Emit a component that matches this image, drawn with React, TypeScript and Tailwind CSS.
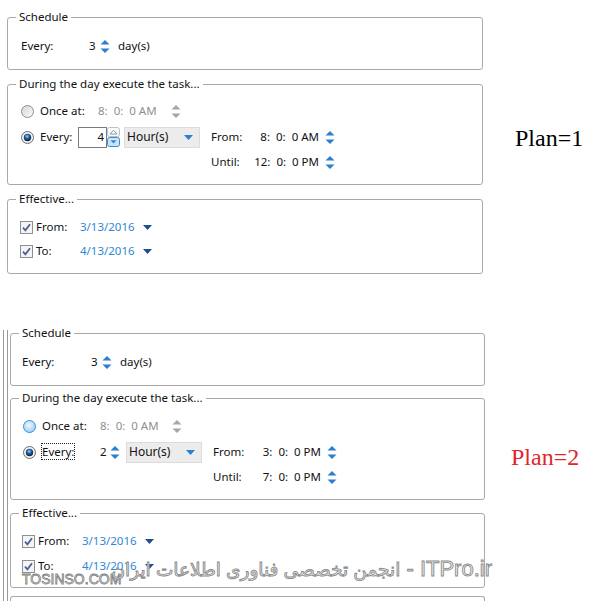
import React from 'react'

// small drawings for the WinForms-like controls
function Spin({ off = false }: { off?: boolean }) {
  const c = off ? '#a6a6a6' : '#2a7fcf'
  return (
    <svg width="10" height="15" viewBox="0 0 10 15" className="shrink-0">
      <path d="M0.5 5.5L5 1L9.5 5.5Z" fill={c} />
      <path d="M0.5 9.5L5 14L9.5 9.5Z" fill={c} />
    </svg>
  )
}

function SpinBox() {
  return (
    <svg width="13" height="20" viewBox="0 0 13 20" className="shrink-0">
      <rect x="0.5" y="0.5" width="12" height="9" rx="2" fill="#fafafa" stroke="#b9c2cc" />
      <path d="M3 7L6.5 3.3L10 7Z" fill="#fff" stroke="#8a8a8a" strokeWidth="0.9" strokeLinejoin="round" />
      <rect x="0.5" y="10.5" width="12" height="9" rx="2" fill="#c4e3f8" stroke="#3c8ccd" />
      <path d="M2.8 13L6.5 16.8L10.2 13Z" fill="#2a7fcf" stroke="#e8f4fd" strokeWidth="0.6" />
    </svg>
  )
}

function Radio({ kind }: { kind: 'off' | 'hover' | 'on' }) {
  return (
    <svg width="13" height="13" viewBox="0 0 13 13" className="shrink-0">
      <defs>
        <linearGradient id="r-off" x1="0" y1="0" x2="1" y2="1">
          <stop offset="0" stopColor="#d4d4d4" />
          <stop offset="1" stopColor="#fbfbfb" />
        </linearGradient>
        <radialGradient id="r-hover" cx="0.45" cy="0.4" r="0.6">
          <stop offset="0" stopColor="#eef8ff" />
          <stop offset="1" stopColor="#9dd0f4" />
        </radialGradient>
        <radialGradient id="r-dot" cx="0.45" cy="0.35" r="0.6">
          <stop offset="0" stopColor="#9ad2fa" />
          <stop offset="0.5" stopColor="#235f9e" />
          <stop offset="1" stopColor="#0a2544" />
        </radialGradient>
      </defs>
      {kind === 'off' && <circle cx="6.5" cy="6.5" r="6" fill="url(#r-off)" stroke="#8d8d8d" />}
      {kind === 'hover' && <circle cx="6.5" cy="6.5" r="6" fill="url(#r-hover)" stroke="#3c8fd2" />}
      {kind === 'on' && (
        <>
          <circle cx="6.5" cy="6.5" r="6" fill="#f2f2f2" stroke="#6d6d6d" />
          <circle cx="6.5" cy="6.5" r="3.7" fill="url(#r-dot)" />
        </>
      )}
    </svg>
  )
}

function Check() {
  return (
    <svg width="13" height="13" viewBox="0 0 13 13" className="shrink-0">
      <rect x="0.5" y="0.5" width="12" height="12" fill="#f4f4f4" stroke="#8e8f8f" />
      <path d="M3 6.6L5.4 9.3L10 3.2" fill="none" stroke="#4a5b9c" strokeWidth="1.7" />
    </svg>
  )
}

function Caret({ dark = false }: { dark?: boolean }) {
  return (
    <svg width="9" height="5" viewBox="0 0 9 5" className="shrink-0">
      <path d="M0 0H9L4.5 5Z" fill={dark ? '#1b4f8e' : '#2a7fcf'} />
    </svg>
  )
}

function Group({ title, className, children }: { title: string; className: string; children: React.ReactNode }) {
  return (
    <div className={`relative border border-[#a9a9a9] rounded-[3px] ${className}`}>
      <span className="absolute left-[8px] -top-[9px] px-[3px] bg-white leading-[16px]">{title}</span>
      {children}
    </div>
  )
}

function Row({ className = '', children }: { className?: string; children: React.ReactNode }) {
  return <div className={`flex items-center h-[20px] ${className}`}>{children}</div>
}

function Combo() {
  return (
    <div className="w-[76px] h-[21px] shrink-0 bg-[#ececec] border border-[#dcdcdc] flex items-center justify-between pl-[2px] pr-[6px]">
      <span className="text-[12px]">Hour(s)</span>
      <Caret />
    </div>
  )
}

function DateRow({ label, value, className = '' }: { label: string; value: string; className?: string }) {
  return (
    <Row className={className}>
      <Check />
      <span className="ml-[3px] w-[44px]">{label}</span>
      <span className="w-[63px] text-[#2f88d4]">{value}</span>
      <Caret dark />
    </Row>
  )
}

function Until({ value }: { value: string }) {
  return (
    <Row className="mt-[5px]">
      <span className="ml-[190px] w-[39px]">Until:</span>
      <span className="w-[69px] text-right whitespace-pre">{value}</span>
      <span className="ml-[6px]"><Spin /></span>
    </Row>
  )
}

export default function App() {
  return (
    <div className="relative w-[609px] h-[601px] overflow-hidden bg-white font-['Segoe_UI','Noto_Sans',sans-serif] text-[11.5px] leading-[16px] text-[#111]">
      {/* Plan 1 */}
      <section className="flex pt-[17px]">
        <div className="ml-[7px] w-[476px] flex flex-col">
          <Group title="Schedule" className="h-[53px] pt-[18px] pl-[13px]">
            <Row>
              <span className="w-[68px]">Every:</span>
              <span className="w-[7px]">3</span>
              <span className="ml-[4px]"><Spin /></span>
              <span className="ml-[8px]">day(s)</span>
            </Row>
          </Group>

          <Group title="During the day execute the task..." className="mt-[14px] h-[101px] pt-[16px] pl-[13px]">
            <Row>
              <Radio kind="off" />
              <span className="ml-[6px] w-[58px]">Once at:</span>
              <span className="w-[73px] whitespace-pre text-[#8f8f8f]">8:  0:  0 AM</span>
              <Spin off />
            </Row>
            <Row className="mt-[6px]">
              <Radio kind="on" />
              <span className="ml-[6px] w-[38px]">Every:</span>
              <div className="w-[29px] h-[21px] shrink-0 border border-[#7a7a7a] flex items-center justify-end pr-[2px]">4</div>
              <SpinBox />
              <span className="ml-[4px]"><Combo /></span>
              <span className="ml-[11px] w-[39px]">From:</span>
              <span className="w-[69px] text-right whitespace-pre">8:  0:  0 AM</span>
              <span className="ml-[6px]"><Spin /></span>
            </Row>
            <Until value="12:  0:  0 PM" />
          </Group>

          <Group title="Effective..." className="mt-[14px] h-[75px] pt-[17px] pl-[12px]">
            <DateRow label="From:" value="3/13/2016" />
            <DateRow label="To:" value="4/13/2016" className="mt-[4px]" />
          </Group>
        </div>
        <div className="ml-[32px] pt-[107px] font-['Liberation_Serif',serif] text-[24px] leading-[28px] text-black">Plan=1</div>
      </section>

      {/* Plan 2 */}
      <section className="mt-[56px] flex">
        <div className="ml-[3px] border-l border-[#9a9a9a] pl-[3px]">
          <div className="border-l border-[#9a9a9a] pl-[2px] pt-[3px]">
            <div className="w-[475px] flex flex-col">
              <Group title="Schedule" className="h-[53px] pt-[18px] pl-[11px]">
                <Row>
                  <span className="w-[69px]">Every:</span>
                  <span className="w-[7px]">3</span>
                  <span className="ml-[4px]"><Spin /></span>
                  <span className="ml-[8px]">day(s)</span>
                </Row>
              </Group>

              <Group title="During the day execute the task..." className="mt-[12px] h-[102px] pt-[17px] pl-[12px]">
                <Row>
                  <Radio kind="hover" />
                  <span className="ml-[6px] w-[58px]">Once at:</span>
                  <span className="w-[72px] whitespace-pre text-[#8f8f8f]">8:  0:  0 AM</span>
                  <Spin off />
                </Row>
                <Row className="mt-[6px]">
                  <Radio kind="on" />
                  <span className="ml-[6px] w-[58px]">
                    <span className="outline-1 outline-dotted outline-[#222]">Every:</span>
                  </span>
                  <span className="w-[7px]">2</span>
                  <span className="ml-[3px]"><Spin /></span>
                  <span className="ml-[6px]"><Combo /></span>
                  <span className="ml-[11px] w-[39px]">From:</span>
                  <span className="w-[69px] text-right whitespace-pre">3:  0:  0 PM</span>
                  <span className="ml-[6px]"><Spin /></span>
                </Row>
                <Until value="7:  0:  0 PM" />
              </Group>

              <Group title="Effective..." className="mt-[13px] h-[75px] pt-[17px] pl-[11px]">
                <DateRow label="From:" value="3/13/2016" />
                <DateRow label="To:" value="4/13/2016" className="mt-[5px]" />
              </Group>

              <div className="mt-[8px] h-[20px] border border-b-0 border-[#a9a9a9] rounded-t-[3px]" />
            </div>
          </div>
        </div>
        <div className="ml-[26px] pt-[113px] font-['Liberation_Serif',serif] text-[24px] leading-[28px] text-[#e0262b]">Plan=2</div>
      </section>

      {/* watermark over the lower box */}
      <div className="absolute left-[22px] top-[571px] font-['Liberation_Sans',sans-serif] text-[14px] leading-[16px] text-white [-webkit-text-stroke:0.8px_#7d7d7d]">
        TOSINSO.COM
      </div>
      <div dir="rtl" className="absolute right-[117px] top-[556px] whitespace-nowrap font-['Liberation_Sans','DejaVu_Sans',sans-serif] text-[22px] leading-[26px] text-[#f2f2f2] [-webkit-text-stroke:0.9px_#8a8a8a]">
        ITPro.ir - <span className="text-[18.5px]">انجمن تخصصی فناوری اطلاعات ایران</span>
      </div>
    </div>
  )
}
